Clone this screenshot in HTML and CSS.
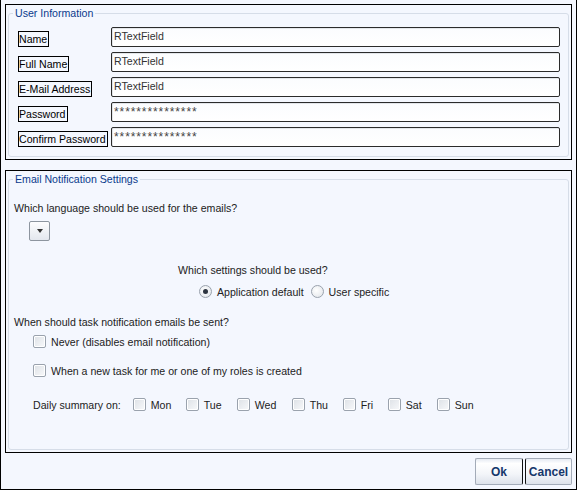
FILE: index.html
```html
<!DOCTYPE html>
<html>
<head>
<meta charset="utf-8">
<link rel="stylesheet" href="styles.css">
</head>
<body>
<div class="window">
  <div class="panel panel-user">
    <fieldset class="group">
      <legend>User Information</legend>
      <div class="group-body body-user">
        <div class="form-grid">
          <span class="lbl">Name</span><div class="field">RTextField</div>
          <span class="lbl">Full Name</span><div class="field">RTextField</div>
          <span class="lbl">E-Mail Address</span><div class="field">RTextField</div>
          <span class="lbl">Password</span><div class="field pw">***************</div>
          <span class="lbl">Confirm Password</span><div class="field pw">***************</div>
        </div>
      </div>
    </fieldset>
  </div>
  <div class="panel panel-email">
    <fieldset class="group">
      <legend>Email Notification Settings</legend>
      <div class="group-body body-email">
        <div class="q q-lang">Which language should be used for the emails?</div>
        <div class="dropdown"><span class="arrow"></span></div>
        <div class="q q-settings">Which settings should be used?</div>
        <div class="radios">
          <span class="radio checked"></span><span class="opt">Application default</span>
          <span class="radio"></span><span class="opt">User specific</span>
        </div>
        <div class="q q-when">When should task notification emails be sent?</div>
        <div class="check-row row-never"><span class="cb"></span><span class="opt">Never (disables email notification)</span></div>
        <div class="check-row row-new"><span class="cb"></span><span class="opt">When a new task for me or one of my roles is created</span></div>
        <div class="daily">
          <span class="daily-lbl">Daily summary on:</span>
          <span class="day"><span class="cb"></span><span class="opt">Mon</span></span>
          <span class="day"><span class="cb"></span><span class="opt">Tue</span></span>
          <span class="day"><span class="cb"></span><span class="opt">Wed</span></span>
          <span class="day"><span class="cb"></span><span class="opt">Thu</span></span>
          <span class="day"><span class="cb"></span><span class="opt">Fri</span></span>
          <span class="day"><span class="cb"></span><span class="opt">Sat</span></span>
          <span class="day"><span class="cb"></span><span class="opt">Sun</span></span>
        </div>
      </div>
    </fieldset>
  </div>
  <div class="buttons">
    <button class="btn btn-ok">Ok</button>
    <button class="btn btn-cancel">Cancel</button>
  </div>
</div>
</body>
</html>
```

FILE: styles.css
```css
* { box-sizing: border-box; }
html, body { margin: 0; padding: 0; background: #f4f7fe; }
body { font-family: "Liberation Sans", Arial, sans-serif; font-size: 10.6px; color: #222; }

.window {
  width: 577px;
  height: 490px;
  border: 1px solid #000;
  border-top: none;
  background: #f4f7fe;
  padding: 4px 4px 0 4px;
  display: flex;
  flex-direction: column;
}

.panel {
  border: 1px solid #000;
  padding: 2px;
}
.panel-user { height: 156px; }
.panel-email { height: 283px; margin-top: 10px; }

.group {
  margin: 0;
  border: 1px solid #d6dde8;
  border-radius: 3px;
  height: 100%;
  padding: 0;
  min-width: 0;
}
.group legend {
  color: #0a3a8c;
  font-size: 10.6px;
  padding: 0 2px;
  margin-left: 4px;
  line-height: 13px;
}
.panel-user .group legend { margin-top: 1px; }

.body-user { padding: 0 8px 0 9px; }
.body-email { padding: 0 8px 0 5px; }

.form-grid {
  display: grid;
  grid-template-columns: 93px 1fr;
  row-gap: 5px;
  align-items: end;
  margin-top: 7px;
}
.lbl {
  justify-self: start;
  border: 1px solid #000;
  color: #000;
  height: 16px;
  line-height: 14px;
  padding: 0 1px 0 0;
}
.field {
  height: 20px;
  border: 1px solid #2b2b2b;
  border-radius: 2px;
  background: linear-gradient(#fbfcfe, #ffffff);
  box-shadow: inset 1px 1px 0 #e3e6ea;
  line-height: 17px;
  padding-left: 2px;
  color: #333;
}
.field.pw { font-size: 12px; letter-spacing: 0.9px; line-height: 18px; color: #444; }

.q { color: #222; line-height: 13px; }
.q-lang { margin-top: 16px; }
.dropdown {
  margin: 6px 0 0 15px;
  width: 21px;
  height: 20px;
  border: 1px solid #8d959f;
  border-radius: 2px;
  background: linear-gradient(#fdfdfe, #e3e7ee);
  display: flex;
  align-items: center;
  justify-content: center;
}
.arrow {
  width: 0; height: 0;
  border-left: 3px solid transparent;
  border-right: 3px solid transparent;
  border-top: 4px solid #333;
}
.q-settings { margin-top: 23px; margin-left: 164px; }
.radios {
  margin: 7px 0 0 185px;
  display: flex;
  align-items: center;
  height: 15px;
}
.radio {
  width: 13px; height: 13px;
  border-radius: 50%;
  border: 1px solid #9aa2ad;
  background: radial-gradient(circle at 40% 40%, #ffffff, #dfe3e8);
  display: inline-flex;
  align-items: center;
  justify-content: center;
  margin-right: 5px;
}
.radio.checked::after {
  content: "";
  width: 5px; height: 5px;
  border-radius: 50%;
  background: #2d3440;
}
.radios .opt { margin-right: 7px; }

.q-when { margin-top: 17px; }
.check-row { display: flex; align-items: center; margin-left: 19px; }
.row-never { margin-top: 6px; }
.row-new { margin-top: 16px; }
.cb {
  width: 13px; height: 13px;
  border: 1px solid #9aa2ad;
  border-radius: 2px;
  background: linear-gradient(135deg, #dde1e6, #f8f9fb);
  box-shadow: inset 0 0 0 1px #ffffff;
  margin-right: 5px;
  flex: none;
}
.opt { color: #222; }

.daily {
  margin: 21px 0 0 19px;
  display: flex;
  align-items: center;
}
.daily-lbl { margin-right: 12px; }
.day { display: flex; align-items: center; }
.day:nth-child(2) { width: 53px; }
.day:nth-child(3) { width: 51px; }
.day:nth-child(4) { width: 55px; }
.day:nth-child(5) { width: 51px; }
.day:nth-child(6) { width: 45px; }
.day:nth-child(7) { width: 49px; }

.buttons {
  display: flex;
  justify-content: flex-end;
  gap: 2px;
  margin-top: 5px;
}
.btn {
  height: 27px;
  border: 1px solid #a3abb8;
  border-radius: 2px;
  background: linear-gradient(#e6ebf3 0%, #ffffff 18%, #f3f5f9 60%, #dde2ea 100%);
  font-family: "Liberation Sans", Arial, sans-serif;
  font-weight: bold;
  font-size: 12px;
  color: #16376b;
  padding: 0;
}
.btn-ok { width: 48px; border-right: 1px solid #111; }
.btn-cancel { width: 47px; border-left: 1px solid #111; }
```
